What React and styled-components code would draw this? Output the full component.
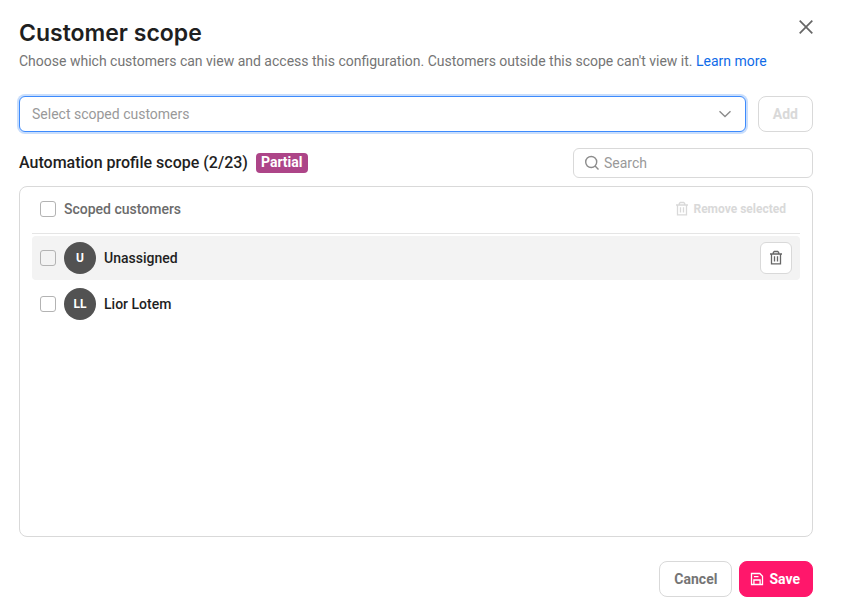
import React, { useState } from "react";
import styled, { createGlobalStyle } from "styled-components";

const GlobalStyle = createGlobalStyle`
  * {
    box-sizing: border-box;
  }
  body {
    margin: 0;
    background-color: #ffffff;
    color: #1f1f1f;
    font-family: Roboto, sans-serif;
    font-size: 14px;
    line-height: 20px;
  }
  button, input, select {
    font-family: inherit;
  }
`;

const Dialog = styled.main`
  min-height: 100vh;
  padding: 16px 29px 16px 19px;
  display: flex;
  flex-direction: column;
`;

const Header = styled.header`
  display: flex;
  justify-content: space-between;
  align-items: flex-start;
  margin-bottom: 25px;
`;

const Title = styled.h1`
  margin: 0;
  font-family: Inter, sans-serif;
  font-size: 23px;
  font-weight: 600;
  line-height: 35px;
`;

const Subtitle = styled.p`
  margin: 0;
  color: #757575;
`;

const Link = styled.a`
  color: #0f6be8;
  text-decoration: none;
`;

const CloseButton = styled.button`
  width: 14px;
  height: 22px;
  padding: 0;
  border: none;
  background: none;
  color: #666666;
  display: flex;
  align-items: center;
  justify-content: center;
  flex-shrink: 0;
  cursor: pointer;
`;

const AddRow = styled.div`
  display: flex;
  gap: 12px;
  margin-bottom: 16px;
`;

const SelectBox = styled.div`
  flex: 1;
  display: grid;
  align-items: center;
  color: #8c8c8c;

  & > * {
    grid-area: 1 / 1;
  }
  svg {
    justify-self: end;
    margin-right: 14px;
    pointer-events: none;
  }
`;

const Select = styled.select`
  width: 100%;
  height: 36px;
  padding: 0 40px 0 12px;
  appearance: none;
  border: 1px solid #3d8bfd;
  border-radius: 6px;
  box-shadow: 0 0 0 2px #c9defc;
  background-color: #ffffff;
  color: #999999;
  font-size: 14px;
  outline: none;
`;

const Button = styled.button`
  height: 36px;
  padding: 0 14px;
  display: flex;
  align-items: center;
  gap: 5px;
  border: 1px solid ${(props) => (props.$primary ? "#ff176b" : "#d9d9d9")};
  border-radius: 8px;
  background-color: ${(props) => (props.$primary ? "#ff176b" : "#ffffff")};
  color: ${(props) => (props.$primary ? "#ffffff" : "#757575")};
  font-size: 14px;
  font-weight: 700;
  cursor: pointer;

  &:disabled {
    color: #d9d9d9;
    cursor: default;
  }
`;

const SaveButton = styled(Button)`
  padding: 0 12px 0 10px;
`;

const ScopeRow = styled.div`
  display: flex;
  align-items: center;
  gap: 8px;
  margin-bottom: 8px;
`;

const ScopeTitle = styled.h2`
  margin: 0;
  font-size: 16px;
  font-weight: 500;
  line-height: 20px;
`;

const Badge = styled.span`
  height: 20px;
  padding: 0 5px;
  border-radius: 4px;
  background-color: #ad4588;
  color: #ffffff;
  font-weight: 700;
  line-height: 19px;
`;

const SearchBox = styled.label`
  width: 240px;
  height: 30px;
  margin-left: auto;
  padding: 0 10px;
  display: flex;
  align-items: center;
  gap: 4px;
  border: 1px solid #d9d9d9;
  border-radius: 6px;
  color: #8c8c8c;
`;

const SearchInput = styled.input`
  flex: 1;
  min-width: 0;
  padding: 0;
  border: none;
  outline: none;
  background: none;
  font-size: 14px;

  &::placeholder {
    color: #999999;
  }
`;

const Panel = styled.section`
  flex: 1;
  padding: 0 12px 12px;
  border: 1px solid #d9d9d9;
  border-radius: 8px;
`;

const PanelHeader = styled.div`
  height: 47px;
  padding: 0 8px 2px;
  display: flex;
  align-items: center;
  justify-content: space-between;
  border-bottom: 1px solid #e5e5e5;
  margin-bottom: 2px;
`;

const CheckLabel = styled.label`
  display: flex;
  align-items: center;
  gap: 8px;
  color: ${(props) => (props.$muted ? "#6b6b6b" : "#1f1f1f")};
  font-weight: 500;
`;

const Checkbox = styled.input`
  width: 16px;
  height: 16px;
  margin: 0;
  appearance: none;
  border: 1px solid #b3b3b3;
  border-radius: 3px;

  &:checked {
    background-color: #3d8bfd;
    border-color: #3d8bfd;
  }
`;

const RemoveButton = styled.button`
  padding: 0 6px;
  display: flex;
  align-items: center;
  gap: 4px;
  border: none;
  background: none;
  color: #666666;
  font-size: 12px;
  font-weight: 700;

  &:disabled {
    color: #d9d9d9;
  }
`;

const CustomerList = styled.ul`
  margin: 0;
  padding: 0;
  list-style: none;
  display: grid;
  gap: 2px;
`;

const CustomerRow = styled.li`
  height: 44px;
  padding: 0 8px;
  display: flex;
  align-items: center;
  justify-content: space-between;
  border-radius: 4px;
  background-color: ${(props) => (props.$active ? "#f3f3f3" : "transparent")};
`;

const Avatar = styled.span`
  width: 32px;
  height: 32px;
  display: flex;
  align-items: center;
  justify-content: center;
  border-radius: 50%;
  background-color: #525252;
  color: #ffffff;
  font-size: 12px;
  font-weight: 700;
`;

const IconButton = styled.button`
  width: 32px;
  height: 32px;
  padding: 0;
  display: flex;
  align-items: center;
  justify-content: center;
  border: 1px solid #d9d9d9;
  border-radius: 6px;
  background-color: #ffffff;
  color: #666666;
  cursor: pointer;
`;

const Footer = styled.footer`
  display: flex;
  justify-content: flex-end;
  gap: 7px;
  margin-top: 24px;
`;

function CloseIcon() {
  return (
    <svg width="14" height="14" viewBox="0 0 14 14" fill="none" stroke="currentColor" strokeWidth="1.7">
      <path d="M0.7 0.7l12.6 12.6M13.3 0.7L0.7 13.3" />
    </svg>
  );
}

function ChevronIcon() {
  return (
    <svg width="14" height="14" viewBox="0 0 14 14" fill="none" stroke="currentColor" strokeWidth="1.4">
      <path d="M1.5 4.3L7 9.6l5.5-5.3" />
    </svg>
  );
}

function SearchIcon() {
  return (
    <svg width="16" height="16" viewBox="0 0 16 16" fill="none" stroke="currentColor" strokeWidth="1.4">
      <circle cx="7.2" cy="7" r="5.5" />
      <path d="M11.1 11l3.4 3.4" />
    </svg>
  );
}

function TrashIcon() {
  return (
    <svg width="14" height="16" viewBox="0 0 14 16" fill="none" stroke="currentColor" strokeWidth="1.3">
      <path d="M1 4h12M4.3 4V2.6l1-1.1h3.4l1 1.1V4M2.5 4v9.8h9V4M5.5 6.3v5.2M8.5 6.3v5.2" />
    </svg>
  );
}

function SaveIcon() {
  return (
    <svg width="14" height="14" viewBox="0 0 14 14" fill="none" stroke="currentColor" strokeWidth="1.3">
      <path d="M1.5 1.5h8.3l2.7 2.7v8.3h-11zM3.9 12.5V8h6.2v4.5M3.9 4.6h4.6" />
    </svg>
  );
}

const customers = [
  { initials: "U", name: "Unassigned" },
  { initials: "LL", name: "Lior Lotem" },
];

function App() {
  const [active, setActive] = useState("Unassigned");

  return (
    <>
      <GlobalStyle />
      <Dialog>
        <Header>
          <div>
            <Title>Customer scope</Title>
            <Subtitle>
              Choose which customers can view and access this configuration.
              Customers outside this scope can't view it.{" "}
              <Link href="#">Learn more</Link>
            </Subtitle>
          </div>
          <CloseButton aria-label="Close">
            <CloseIcon />
          </CloseButton>
        </Header>
        <AddRow>
          <SelectBox>
            <Select aria-label="Select scoped customers" defaultValue="">
              <option value="">Select scoped customers</option>
            </Select>
            <ChevronIcon />
          </SelectBox>
          <Button disabled>Add</Button>
        </AddRow>
        <ScopeRow>
          <ScopeTitle>Automation profile scope (2/23)</ScopeTitle>
          <Badge>Partial</Badge>
          <SearchBox>
            <SearchIcon />
            <SearchInput type="text" placeholder="Search" aria-label="Search" />
          </SearchBox>
        </ScopeRow>
        <Panel>
          <PanelHeader>
            <CheckLabel $muted>
              <Checkbox type="checkbox" />
              Scoped customers
            </CheckLabel>
            <RemoveButton disabled>
              <TrashIcon />
              Remove selected
            </RemoveButton>
          </PanelHeader>
          <CustomerList>
            {customers.map(({ initials, name }) => (
              <CustomerRow
                key={name}
                $active={active === name}
                onMouseEnter={() => setActive(name)}
              >
                <CheckLabel>
                  <Checkbox type="checkbox" />
                  <Avatar>{initials}</Avatar>
                  {name}
                </CheckLabel>
                {active === name && (
                  <IconButton aria-label={`Remove ${name}`}>
                    <TrashIcon />
                  </IconButton>
                )}
              </CustomerRow>
            ))}
          </CustomerList>
        </Panel>
        <Footer>
          <Button>Cancel</Button>
          <SaveButton $primary>
            <SaveIcon />
            Save
          </SaveButton>
        </Footer>
      </Dialog>
    </>
  );
}

export default App;
